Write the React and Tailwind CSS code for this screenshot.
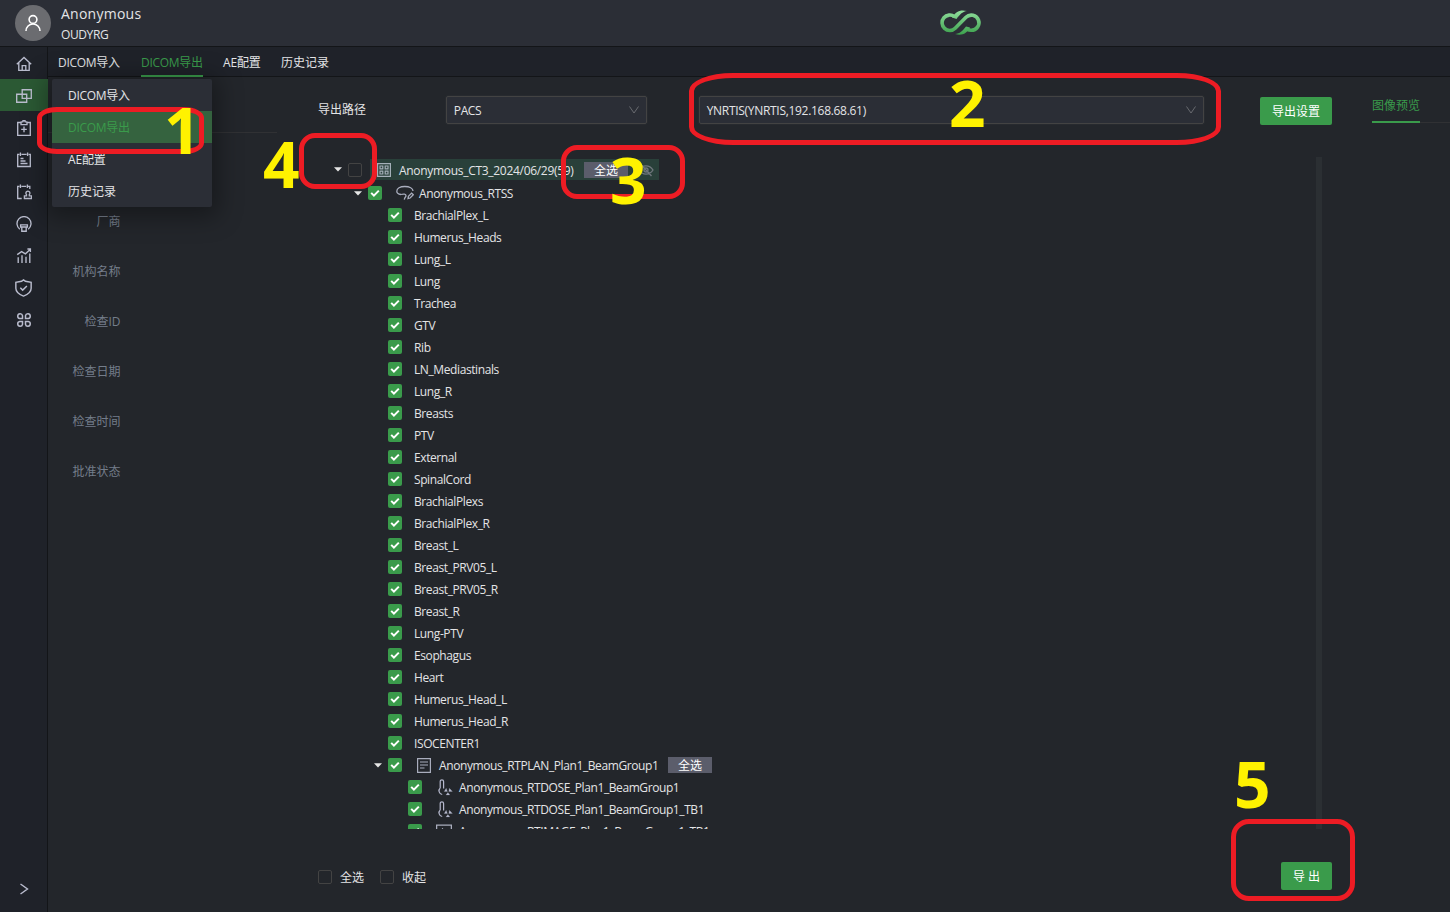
const F = "font-['Open_Sans','Noto_Sans_CJK_SC',sans-serif]";

const nodes = [
  'BrachialPlex_L', 'Humerus_Heads', 'Lung_L', 'Lung', 'Trachea', 'GTV', 'Rib', 'LN_Mediastinals', 'Lung_R',
  'Breasts', 'PTV', 'External', 'SpinalCord', 'BrachialPlexs', 'BrachialPlex_R', 'Breast_L', 'Breast_PRV05_L',
  'Breast_PRV05_R', 'Breast_R', 'Lung-PTV', 'Esophagus', 'Heart', 'Humerus_Head_L', 'Humerus_Head_R', 'ISOCENTER1',
];

const fields = ['厂商', '机构名称', '检查ID', '检查日期', '检查时间', '批准状态'];

function Icon({ children, className = 'size-4', box = '0 0 16 16', w = 1.35 }) {
  return (
    <svg viewBox={box} className={`shrink-0 ${className}`} fill="none" stroke="currentColor" strokeWidth={w}>
      {children}
    </svg>
  );
}

const sideIcons = [
  <Icon key="home"><path d="M.8 8.2 8 1.500l7.200 6.700M2.800 7v7.400h10.400V7M6.200 14.400V9.600h3.600v4.800" /></Icon>,
  <Icon key="swap"><path d="M6.200 1.700h9.100v8.600H6.200zM.7 6.200h10v8H.7z" /></Icon>,
  <Icon key="plus"><path d="M5 2.500H1.700v12.800h12.600V2.500H11M5 4.600V2l2-.4V.6h2v1l2 .4v2.600zM8 6.600v5.600M5.200 9.400h5.600" /></Icon>,
  <Icon key="list"><path d="M3.400 2.300H1.700v12.200h12.600V2.300h-1.700M5.400 2.300h5.200M4.400.5v3.600M11.600.5v3.600M4.500 6.500h3M4.500 9h5M4.500 11.500h7" /></Icon>,
  <Icon key="user"><path d="M3.400 2.300H1.700v12.200h4M13.800 5V2.300h-1.700M5.400 2.300h4.800M4.400.5v3.600M11.400.5v3.600M10.500 10.600a2 2 0 1 1 2.800 0v1.300h2.200v2.600H8.400v-2.600h2.100z" /></Icon>,
  <Icon key="lamp"><path d="M3.800 13.200A7 7 0 1 1 12.200 13.200M4.600 8.800h6.800v2.200H4.600zM5.800 11v4.200h4.400V11" /></Icon>,
  <Icon key="chart"><path d="M2.200 15V9.200M6 15V7.200M10 15V8.800M13.800 15V5.600M1.200 6.600 5.600 3.600l3.800 2.200 5-4.600M11.400 1h3v3" /></Icon>,
  <Icon key="shield" className="h-[18px] w-[17px]"><path d="M8 .4 9.800 1.700 15.200 2.700v5.500c0 3.600-3.600 6-7.200 7.400C4.400 14.200.8 11.800.8 8.200V2.700l5.400-1zM5 7.800l2.200 2.200 4-3.800" /></Icon>,
  <Icon key="clover" w={1.500}><path d="M6.500 6.500H3.700a2.400 2.400 0 1 1 2.800-2.800zM9.500 6.500V3.700A2.400 2.400 0 1 1 12.300 6.500zM6.500 9.500V12.300A2.400 2.400 0 1 1 3.700 9.500zM9.500 9.500H12.300A2.400 2.400 0 1 1 9.500 12.300z" /></Icon>,
];

function Check({ on = true }) {
  return on ? (
    <span className="flex size-3.5 shrink-0 items-center justify-center rounded-[2px] bg-[#3a9b4b]">
      <svg viewBox="0 0 14 14" className="size-3.5" fill="none" stroke="#fff" strokeWidth="2"><path d="m3.200 6.900 2.700 2.700 4.900-5" /></svg>
    </span>
  ) : (
    <span className="size-3.5 shrink-0 rounded-[2px] border border-[#434343]" />
  );
}

function Caret() {
  return <svg viewBox="0 0 8 5" className="h-[5px] w-2 shrink-0" fill="#e6e6e6"><path d="M0 .3h8L4 4.500z" /></svg>;
}

function AllTag() {
  return <span className="flex h-4 w-11 shrink-0 items-center justify-center bg-[#5b5d6b] pt-0.5 text-xs tracking-normal text-white">全选</span>;
}

function DoseIcon() {
  return (
    <Icon className="ml-[15px] mr-1.5 h-[17px] w-4 text-[#b4b7cc]" w={1.200}>
      <path d="M3.200 8.500V2a1.700 1.700 0 0 1 3.400 0v7M3.200 8.500a3.800 3.800 0 0 0 2 6.500" />
      <path d="M9.200 8.800 7.200 12h3.200zM12.400 8.800l-.6 3.200h3.600zM9 15.400l1.900-2.400 1.900 2.400z" fill="currentColor" strokeWidth=".2" />
    </Icon>
  );
}

function Select({ text, className }) {
  return (
    <div className={`flex h-7 items-center justify-between rounded-[2px] border border-[#434343] bg-[#2b2e36] pr-[7px] pl-[7px] shadow-[0_0_0_1px_#272a2f] ${className}`}>
      <span className="pt-0.5">{text}</span>
      <svg viewBox="0 0 10 8" className="h-2 w-2.5" fill="none" stroke="#696b70"><path d="m.5.5 4.500 6.500L9.500.5" /></svg>
    </div>
  );
}

function Mark({ n, box, num, r = 'rounded-[16px]' }) {
  return (
    <>
      <div className={`pointer-events-none absolute border-5 border-[#ed1c24] ${r} ${box}`} />
      <span className={`pointer-events-none absolute font-['Open_Sans'] text-[64px] leading-none font-bold text-[#fff200] ${num}`}>{n}</span>
    </>
  );
}

export default function App() {
  return (
    <div className={`relative flex h-[912px] w-[1450px] flex-col overflow-hidden bg-[#23262b] text-xs whitespace-nowrap text-[#e3e4e6] ${F}`}>
      <header className="flex h-[47px] shrink-0 items-center border-b border-[#131518] bg-[#2b2e36] pl-[15px]">
        <div className="flex size-9 items-center justify-center rounded-full bg-[#6b6c70]">
          <Icon className="size-[18px] text-white" box="0 0 18 18" w={1.600}><circle cx="9" cy="5.500" r="3.900" /><path d="M2 17a7 7 0 0 1 14 0" /></Icon>
        </div>
        <div className="ml-[10px] w-[200px] pt-px">
          <div className="h-5 text-sm leading-5 tracking-[0.25px]">Anonymous</div>
          <div className="h-5 text-xs leading-[21px] tracking-[-0.4px]">OUDYRG</div>
        </div>
        <svg viewBox="0 0 42 27" className="mb-[2px] ml-[679px] h-[27px] w-[42px]" fill="none">
          <defs><linearGradient id="lg" gradientUnits="userSpaceOnUse" x1="0" y1="2" x2="0" y2="26"><stop stopColor="#8fdc9b" /><stop offset="1" stopColor="#3ba04c" /></linearGradient></defs>
          <path stroke="url(#lg)" strokeWidth="3.600" d="M14.500 7.700A7.700 7.700 0 1 0 15.200 19.200L26 8.300A7.600 7.600 0 1 1 31 21.300c-1.400 0-2.600-.3-3.600-.9" />
          <path fill="url(#lg)" d="M12 8.500C16 2.500 20 .2 27 2c-5 .7-7 3.400-10.500 8zM30 18.500c-3 6-8 8.500-15 6.500 5-.4 7.500-3 11-7.500z" />
        </svg>
      </header>

      <div className="flex min-h-0 flex-1">
        <aside className="flex w-12 shrink-0 flex-col border-r border-[#131518] bg-[#1f2229] text-[#b9bccd]">
          {sideIcons.map((icon, i) => (
            <div key={i} className={`flex h-8 items-center justify-center pt-px ${i === 1 ? 'w-12 bg-[#2b5934]' : ''}`}>{icon}</div>
          ))}
          <div className="mt-auto flex h-[46px] items-center justify-center"><Icon w={1.400} className="size-4"><path d="m4.500 3 7 5-7 5" /></Icon></div>
        </aside>

        <main className="flex min-w-0 flex-1 flex-col">
          <nav className="flex h-[30px] shrink-0 border-b border-[#131518] bg-[#1f2229] pl-[10px] leading-[31px]">
            <span className="w-[83px] tracking-[-0.3px]">DICOM导入</span>
            <span className="mr-5 h-[30px] w-[62px] border-b-2 border-[#3a9b4b] tracking-[-0.3px] text-[#3a9b4b]">DICOM导出</span>
            <span className="w-[58px] tracking-[-0.15px]">AE配置</span>
            <span>历史记录</span>
          </nav>

          <div className="flex min-h-0 flex-1">
            <section className="flex w-[229px] shrink-0 flex-col pt-[55px]">
              <div className="h-[65px] border-t border-[#303134]" />
              {fields.map((f) => (
                <div key={f} className="flex h-[50px] w-[72.500px] items-center justify-end text-[#747d8a]">{f}</div>
              ))}
            </section>

            <section className="flex w-[1055px] shrink-0 flex-col pt-[19px] pl-[41px]">
              <div className="flex h-7 items-center">
                <span className="w-32">导出路径</span>
                <Select text="PACS" className="w-[201px] tracking-[-0.4px]" />
                <Select text="YNRTIS(YNRTIS,192.168.68.61)" className="ml-[52px] w-[506px] tracking-[-0.3px]" />
                <button className="mt-0.5 ml-14 h-7 w-[72px] rounded-[2px] bg-[#3a9b4b] pt-0.5 text-white">导出设置</button>
              </div>
              <div className="mt-[33px] flex h-[672px] w-[1004px] justify-between overflow-hidden">
                <div className="flex flex-col pt-px leading-[22px]">
                  <div className="mb-px flex h-[23px] shrink-0 items-center pl-4">
                    <Caret />
                    <span className="w-1.5" />
                    <Check on={false} />
                    <div className="ml-2 flex h-[21px] w-[289px] items-center bg-[#29403a]">
                      <Icon className="ml-[7px] size-3.5 text-[#a4b0b8]" box="0 0 14 14" w={1.200}><path d="M.6.6h12.800v12.800H.6zM3 3h2.800v2.800H3zM8.200 3H11v2.800H8.200zM3 8.200h2.800V11H3zM8.200 8.200H11V11H8.200z" /></Icon>
                      <span className="ml-2 w-[185px] pt-0.5 tracking-[-0.3px]">Anonymous_CT3_2024/06/29(59)</span>
                      <AllTag />
                      <Icon className="ml-2.5 size-4 text-[#70777d]"><path d="M1 8c3.500-5.500 10.500-5.500 14 0-3.500 5.500-10.500 5.500-14 0zM2.500 2l11 12" /><circle cx="8" cy="8" r="2" /></Icon>
                    </div>
                  </div>
                  <div className="flex h-[22px] shrink-0 items-center pl-9">
                    <Caret /><span className="w-1.5" /><Check />
                    <Icon className="ml-3.5 h-4 w-[18px] text-[#a9adbd]" box="0 0 18 16" w={1.300}><path d="M5 9.500C2 9 .8 8 .8 6.200.8 3.500 4 1.500 8.800 1.500s8.200 1.800 8.200 4.500M5 9.500c2.500-.8 5-.5 5 1.200 0 1.500-2 2-1.500 4M12 13.600l.4-2.300 3.200-3.200 1.700 1.700-3.200 3.200z" /></Icon>
                    <span className="ml-[5px] pt-0.5 tracking-[-0.38px]">Anonymous_RTSS</span>
                  </div>
                  {nodes.map((n) => (
                    <div key={n} className="flex h-[22px] shrink-0 items-center pl-[70px]"><Check /><span className="ml-3 pt-0.5 tracking-[-0.4px]">{n}</span></div>
                  ))}
                  <div className="flex h-[22px] shrink-0 items-center pl-14">
                    <Caret /><span className="w-1.5" /><Check />
                    <Icon className="ml-[15px] h-[15px] w-3.5 text-[#a9adbd]" box="0 0 14 15" w={1.200}><path d="M.6.6h12.800v13.800H.6zM3 4h8M3 7h8M3 10h4.500" /></Icon>
                    <span className="ml-2 w-[229px] pt-0.5 tracking-[-0.4px]">Anonymous_RTPLAN_Plan1_BeamGroup1</span>
                    <AllTag />
                  </div>
                  <div className="flex h-[22px] shrink-0 items-center pl-[90px]"><Check /><DoseIcon /><span className="pt-0.5 tracking-[-0.41px]">Anonymous_RTDOSE_Plan1_BeamGroup1</span></div>
                  <div className="flex h-[22px] shrink-0 items-center pl-[90px]"><Check /><DoseIcon /><span className="pt-0.5 tracking-[-0.41px]">Anonymous_RTDOSE_Plan1_BeamGroup1_TB1</span></div>
                  <div className="flex h-[22px] shrink-0 items-center pl-[90px]"><Check /><Icon className="mr-[7px] ml-3.5 size-4 text-[#a9adbd]"><path d="M.6 2.100h14.800v12.300H.6zM3 11l3.500-5 3 4 2-2 2 3" /></Icon><span className="pt-0.5 tracking-[-0.41px]">Anonymous_RTIMAGE_Plan1_BeamGroup1_TB1</span></div>
                </div>
                <div className="w-1.5 bg-[#2b2f33]" />
              </div>
              <div className="mt-[33px] flex h-7 items-center">
                <span className="mt-0.5 flex"><Check on={false} /></span><span className="ml-2 w-10 pt-[3px]">全选</span>
                <span className="mt-0.5 flex"><Check on={false} /></span><span className="ml-2 pt-[3px]">收起</span>
                <button className="ml-[855px] h-7 w-[51px] rounded-[2px] bg-[#3a9b4b] pt-0.5 text-white">导 出</button>
              </div>
            </section>

            <section className="flex min-w-0 flex-1 pt-[13px] pl-10">
              <div className="h-[33px] w-12 border-b-2 border-[#3a9b4b] leading-[31px] text-[#3a9b4b]">图像预览</div>
              <div className="h-[33px] flex-1 border-b border-[#303134]" />
            </section>
          </div>
        </main>
      </div>

      <div className="absolute top-[79px] left-[52px] w-40 rounded-[2px] bg-[#2b2e36] leading-[34px] shadow-[0_4px_24px_6px_rgba(0,0,0,0.35)]">
        <div className="h-8 pl-4 tracking-[-0.3px]">DICOM导入</div>
        <div className="h-8 bg-[#35633f] pl-4 tracking-[-0.3px] text-[#3a9b4b]">DICOM导出</div>
        <div className="h-8 pl-4 tracking-[-0.15px]">AE配置</div>
        <div className="h-8 pl-4">历史记录</div>
      </div>

      <Mark n="1" box="left-[37px] top-[107px] w-[167px] h-[47px]" r="rounded-[20px/11px]" num="left-[164px] top-[98px]" />
      <Mark n="2" box="left-[689px] top-[73px] w-[532px] h-[72px]" r="rounded-[44px/18px]" num="left-[949px] top-[71px]" />
      <Mark n="3" box="left-[561px] top-[145px] w-[124px] h-[54px]" num="left-[610px] top-[148px]" />
      <Mark n="4" box="left-[299px] top-[133px] w-[78px] h-[56px]" num="left-[263px] top-[132px]" />
      <Mark n="5" box="left-[1231px] top-[819px] w-[124px] h-[82px]" r="rounded-[18px]" num="left-[1234px] top-[752px]" />
    </div>
  );
}
